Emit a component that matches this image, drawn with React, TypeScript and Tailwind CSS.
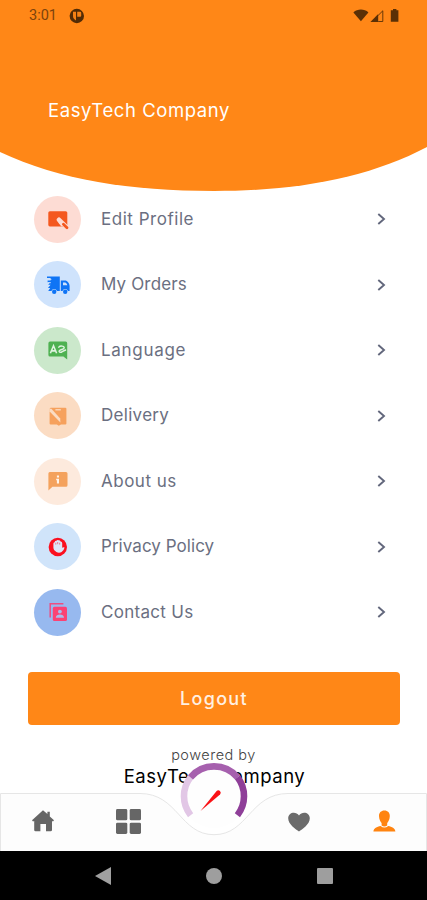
import React from 'react';

interface MenuItem {
  label: string;
  circle: string;
  tracking: string;
  icon: React.ReactNode;
}

const menuItems: MenuItem[] = [
  {
    label: 'Edit Profile',
    circle: 'bg-[#fddcd4]',
    tracking: 'tracking-[0.53px]',
    icon: (
      <svg className="w-6 h-6" viewBox="0 0 24 24">
        <rect x="2.3" y="4.2" width="19" height="15.2" rx="1.6" fill="#f4581f" />
        <path d="M13 12.8L21 20.6" stroke="#fddcd4" strokeWidth="4.6" strokeLinecap="round" />
        <path d="M17.4 17.2L21 20.8" stroke="#f4581f" strokeWidth="2.8" strokeLinecap="round" />
        <path d="M13.2 15.4L15.6 18.6" stroke="#fddcd4" strokeWidth="1.6" strokeLinecap="round" />
      </svg>
    ),
  },
  {
    label: 'My Orders',
    circle: 'bg-[#cfe3fc]',
    tracking: 'tracking-[0.15px]',
    icon: (
      <svg className="w-6 h-6" viewBox="0 0 24 24">
        <g fill="#0f74f5">
          <path d="M1 3.4h12.8V18H11a3 3 0 0 0-5.6 0H2.2l2-3H2l2.6-3.2H2.2l2-2.6H1.6V7.4h3V5H1z" />
          <path d="M14.8 7.6H19c2.3 0 4.4 2.6 4.6 5.4v5H22a3 3 0 0 0-5.6 0h-1.6z" />
          <circle cx="8.2" cy="18.8" r="2.2" />
          <circle cx="19.2" cy="18.8" r="2.2" />
        </g>
        <path d="M17 9.4h2c1.2.2 2 1.3 2.3 2.8H17z" fill="#cfe3fc" />
        <path d="M1.4 6.4h4M2 9.7h3" stroke="#cfe3fc" strokeWidth="0.8" />
      </svg>
    ),
  },
  {
    label: 'Language',
    circle: 'bg-[#cbe8cb]',
    tracking: 'tracking-[0.7px]',
    icon: (
      <svg className="w-6 h-6" viewBox="0 0 24 24">
        <path d="M4 3.6h15.6a1.6 1.6 0 0 1 1.6 1.6v16.4l-3.8-3H4A1.6 1.6 0 0 1 2.4 17V5.2A1.6 1.6 0 0 1 4 3.6z" fill="#4eb151" />
        <path d="M4.4 15.2L7.5 7.8l3.1 7.4M5.5 12.9h4" stroke="#dff3df" strokeWidth="1.6" fill="none" />
        <path d="M12.8 9.2c1.2-1.6 5.4-1.6 5.4.6 0 2-3.8 1.4-5 3-.6 1.6 1.6 2 3 .8l3.4-1.6" stroke="#dff3df" strokeWidth="1.4" fill="none" strokeLinecap="round" />
      </svg>
    ),
  },
  {
    label: 'Delivery',
    circle: 'bg-[#fbdcc3]',
    tracking: 'tracking-[0.3px]',
    icon: (
      <svg className="w-6 h-6" viewBox="0 0 24 24">
        <path d="M4.6 3.8h14.8q1 0 1 1v14.6q0 1-1 1H15l-2.2 1.4-2-1.4H4.6q-1 0-1-1V4.8z" fill="#f6a15d" />
        <path d="M3.4 4.8h2l8.8 9.8.2 3.8L3.4 7.2z" fill="#fbdcc3" />
        <path d="M9.4 5.8h5.4" stroke="#fbdcc3" strokeWidth="1.3" />
      </svg>
    ),
  },
  {
    label: 'About us',
    circle: 'bg-[#fdeadd]',
    tracking: 'tracking-[0.5px]',
    icon: (
      <svg className="w-6 h-6" viewBox="0 0 24 24">
        <path d="M4 3h16a1.5 1.5 0 0 1 1.5 1.5v11.7a1.5 1.5 0 0 1-1.5 1.5H6.4l-4 3.8v-17A1.5 1.5 0 0 1 4 3z" fill="#f4a25d" />
        <path d="M10.9 6.4H13v2h-2.1zM10.2 9.8H13v4.6h-2.1v-3.2h-.7z" fill="#fff4ea" />
      </svg>
    ),
  },
  {
    label: 'Privacy Policy',
    circle: 'bg-[#d0e4fa]',
    tracking: 'tracking-[0.05px]',
    icon: (
      <svg className="w-6 h-6" viewBox="0 0 24 24">
        <circle cx="11.8" cy="12" r="9.2" fill="#fb1020" />
        <path d="M7.4 8.6q0-1.2 1.2-1.4.4-1.6 1.8-1.4.8-1.1 2.2-.6 1.4-.2 2 1.2 1.6.2 1.6 1.8v4.6q1.4-1.1 2.4-.3-.9 3.3-3 4.500-2.400 1.200-5.200.1-3-1.300-3-4.100z" fill="#dce6f8" />
        <path d="M9.8 9.6V7.800M11.700 9.200V7M13.700 9.600V7.800" stroke="#fb1020" strokeWidth="0.5" />
      </svg>
    ),
  },
  {
    label: 'Contact Us',
    circle: 'bg-[#97b9ef]',
    tracking: 'tracking-[0.3px]',
    icon: (
      <svg className="w-6 h-6" viewBox="0 0 24 24">
        <path d="M17.4 3.8H4.2v13.6" stroke="#ef4d82" strokeWidth="1.5" fill="none" />
        <rect x="6.8" y="6.8" width="14.2" height="14.2" rx="1.6" fill="#fb4274" />
        <circle cx="13.9" cy="11.6" r="1.9" fill="#a9bbee" />
        <path d="M9.8 17.8c0-2.2 2-3.2 4.1-3.2s4.1 1 4.1 3.2z" fill="#a9bbee" />
      </svg>
    ),
  },
];

function StatusBar() {
  return (
    <div className="relative flex items-center justify-between h-8 pl-[29px] pr-[27px] text-[#7c430c]">
      <div className="flex items-center gap-3">
        <span className="text-[14.5px] leading-none font-['Roboto',sans-serif]">3:01</span>
        <svg className="w-4 h-4" viewBox="0 0 16 16">
          <circle cx="7.8" cy="8" r="7.2" fill="#522b06" />
          <path d="M4 3.8h3v8.6q-3-1.4-3-4.4zM8.2 3.8h3q1 0 1 1v3q0 1-1 1h-3z" fill="#f58014" />
        </svg>
      </div>
      <svg className="w-[47px] h-4 text-[#5a3006]" viewBox="0 0 47 16">
        <path d="M.4 4.4C4.4.6 11.4.6 15.4 4.4L7.9 13.2z" fill="currentColor" />
        <path d="M17.4 14l7.8-8.1V14z" fill="currentColor" />
        <path d="M25.2 13.5h4.6V2.8l-4.6 4.6" stroke="currentColor" fill="none" strokeWidth="0.9" />
        <path d="M40 1h3.4v1.3h2v11.5h-7.6V2.3H40z" fill="currentColor" />
      </svg>
    </div>
  );
}

function Header() {
  return (
    <header className="relative h-[186.5px] shrink-0">
      <svg className="absolute left-0 top-0 w-[427px] h-[192px]" viewBox="0 0 427 192">
        <path d="M0 0H427V147C370 177 300 191 214 191C130 191 60 180 0 152z" fill="#ff8717" />
      </svg>
      <StatusBar />
      <h1 className="relative pt-[66px] pl-12 text-[18.5px] leading-6 text-white tracking-[0.57px] whitespace-nowrap">
        EasyTech Company
      </h1>
    </header>
  );
}

function MenuRow({ item }: { item: MenuItem }) {
  return (
    <li className="flex items-center h-[65.5px] pl-[34px] pr-[41px]">
      <div className={`flex items-center justify-center w-[47px] h-[47px] rounded-full ${item.circle}`}>
        {item.icon}
      </div>
      <span className={`flex-1 ml-5 text-[17px] text-[#6b6f81] ${item.tracking}`}>{item.label}</span>
      <svg className="w-[9px] h-3" viewBox="0 0 9 12">
        <path d="M1.3 1L7 6l-5.7 5" fill="none" stroke="#62677c" strokeWidth="1.9" />
      </svg>
    </li>
  );
}

// Three-colour dial that sits in the notch of the bottom nav
function Gauge() {
  return (
    <svg className="absolute left-[179px] top-[-31px] w-[70px] h-[70px]" viewBox="0 0 70 70">
      <circle cx="35" cy="35" r="31" fill="#fefefe" />
      <g fill="none" strokeWidth="6.6">
        <path d="M11.6 53.2A30.7 30.7 0 0 1 11.5 15.3" stroke="#e2c7e6" />
        <path d="M11.5 15.3A30.7 30.7 0 0 1 58.5 15.3" stroke="#a660ae" />
        <path d="M58.5 15.3A30.7 30.7 0 0 1 58.4 53.2" stroke="#8f3f99" />
      </g>
      <path d="M21.5 49L37.6 29.1A2.2 2.2 0 0 1 41 32.4z" fill="#fa1216" />
    </svg>
  );
}

function BottomNav() {
  return (
    <nav className="relative h-[58px] shrink-0">
      <svg className="absolute inset-0 w-[427px] h-[58px]" viewBox="0 0 427 58">
        <path d="M.5 58V.5H140C178 .5 180 41.7 214 41.7S250 .5 288 .5H426.5V58" fill="#fdfdfd" stroke="#e6e6e6" />
      </svg>
      <Gauge />
      <div className="relative grid grid-cols-5 h-full pb-0.5 items-center justify-items-center">
        <svg className="w-6 h-6" viewBox="0 0 24 24">
          <path d="M12 1.2l4.4 3.9V2.8h2.4v4.6l4.2 3.8-1 1.3-1-.6v9q0 1.400-1.400 1.400H15v-7.400H9.400v7.400H4.600q-1.400 0-1.400-1.400v-9l-1.200.6-1-1.300z" fill="#666" />
        </svg>
        <svg className="w-[25px] h-[25px]" viewBox="0 0 25 25">
          <g fill="#666">
            <rect width="11.3" height="11.3" rx="1.4" />
            <rect x="13.7" width="11.3" height="11.3" rx="1.4" />
            <rect y="13.7" width="11.3" height="11.3" rx="1.4" />
            <rect x="13.7" y="13.7" width="11.3" height="11.3" rx="1.4" />
          </g>
        </svg>
        <span />
        <svg className="w-6 h-6" viewBox="0 0 24 24">
          <path d="M12 22.4C9 20.4 1.2 15.4 1.2 9.2 1.2 3.4 8.8 1.6 12 6.6 15.2 1.6 22.8 3.4 22.8 9.2 22.8 15.4 15 20.4 12 22.4z" fill="#6b6b6b" />
        </svg>
        <svg className="w-6 h-6" viewBox="0 0 24 24">
          <path d="M12.4 1.4c3.4 0 5.6 2.4 5.4 5.8-.2 3.6-1.6 5.6-2.6 6.8v2.6q-2.8 1.7-5.6 0V14C8.6 12.8 7.2 10.8 7 7.2 6.8 3.8 9 1.4 12.4 1.4z" fill="#ff8410" />
          <path d="M8.6 17q3.8 3.2 7.6 0c3.8.8 6.8 2 7.2 5.6h-22c.4-3.6 3.4-4.8 7.2-5.6z" fill="#ff8410" />
        </svg>
      </div>
    </nav>
  );
}

function SystemBar() {
  return (
    <div className="flex items-center justify-center gap-[95px] h-[49px] shrink-0 pl-px bg-black">
      <svg className="w-4 h-[18px]" viewBox="0 0 16 18">
        <path d="M0 9L16 0v18z" fill="#a0a0a0" />
      </svg>
      <div className="w-4 h-4 rounded-full bg-[#9e9e9e]" />
      <div className="w-4 h-4 rounded-[1px] bg-[#9e9e9e]" />
    </div>
  );
}

export default function App() {
  return (
    <div className="flex flex-col w-[427px] h-[900px] overflow-hidden bg-white font-['Inter',sans-serif]">
      <Header />
      <ul className="shrink-0">
        {menuItems.map((item) => (
          <MenuRow key={item.label} item={item} />
        ))}
      </ul>
      <button className="shrink-0 mt-[27px] ml-7 mr-[27px] h-[52.5px] rounded bg-[#ff8717] text-[18px] font-medium text-[#fff0e2] tracking-[1.3px]">
        Logout
      </button>
      <footer className="flex-1 min-h-0 pt-5 text-center">
        <p className="text-[14.5px] leading-5 font-light text-[#444] tracking-[0.5px]">powered by</p>
        <p className="pl-0.5 text-[18.5px] leading-[22px] text-black tracking-[0.55px] whitespace-nowrap">EasyTech Company</p>
      </footer>
      <BottomNav />
      <SystemBar />
    </div>
  );
}
